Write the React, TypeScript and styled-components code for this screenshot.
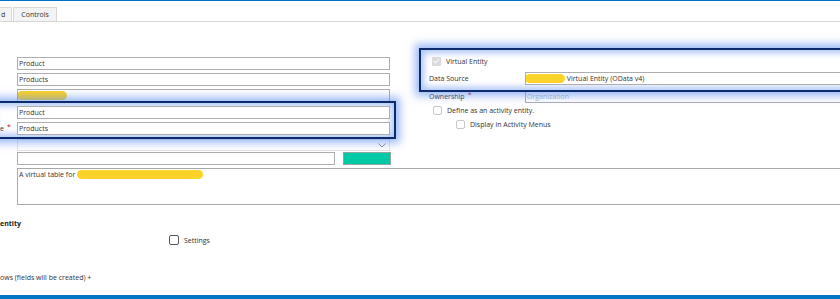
import styled, { createGlobalStyle } from "styled-components";

const GlobalStyle = createGlobalStyle`
  html, body {
    margin: 0;
    padding: 0;
    background: #ffffff;
  }
  body {
    font-family: "Open Sans", "Noto Sans", sans-serif;
    font-size: 7px;
    color: #333333;
  }
`;

const Frame = styled.div`
  width: 840px;
  height: 299px;
  box-sizing: border-box;
  overflow: hidden;
  display: flex;
  flex-direction: column;
  border-top: 1px solid #0072c6;
  border-bottom: 4px solid #0077c2;
`;

const TabBar = styled.div`
  margin-top: 6px;
  height: 15px;
  box-sizing: border-box;
  display: flex;
  align-items: flex-end;
  border-bottom: 1px solid #d6d6d6;
`;

const Tab = styled.div<{ $cut?: boolean }>`
  height: 14px;
  box-sizing: border-box;
  display: flex;
  align-items: center;
  padding: ${(p) => (p.$cut ? "0 6px 0 1px" : "0 7px")};
  margin-right: 1px;
  background: #f3f3f3;
  border: 1px solid #d8d8d8;
  border-left: ${(p) => (p.$cut ? "none" : "1px solid #d8d8d8")};
  border-bottom: none;
  color: #333;
`;

const Columns = styled.div`
  display: flex;
  align-items: flex-start;
  column-gap: 23px;
`;

const LeftCol = styled.div`
  flex: 0 0 396px;
  padding-top: 35px;
  display: flex;
  flex-direction: column;
  row-gap: 3px;
`;

const Row = styled.div<{ $h?: number }>`
  display: grid;
  grid-template-columns: 14px 373px;
  column-gap: 3px;
  align-items: center;
  height: ${(p) => p.$h ?? 13}px;
`;

const Label = styled.div`
  white-space: nowrap;
  color: #333;
`;

const Req = styled.span`
  color: #d0021b;
  margin-left: 3px;
  position: relative;
  top: -2px;
`;

const Field = styled.div<{ $muted?: boolean }>`
  height: 13px;
  box-sizing: border-box;
  border: 1px solid #adadad;
  background: #fff;
  padding: 0 1px;
  line-height: 11px;
  white-space: nowrap;
  overflow: hidden;
  display: flex;
  align-items: center;
  color: ${(p) => (p.$muted ? "#b4b4b4" : "#333")};
`;

const Redact = styled.span<{ $w: number; $shift?: number }>`
  display: inline-block;
  width: ${(p) => p.$w}px;
  height: 9px;
  border-radius: 5px;
  background: #fdd329;
  margin-left: ${(p) => p.$shift ?? 0}px;
  flex: 0 0 auto;
`;

const Highlight = styled.div`
  position: relative;
  z-index: 1;
  border: 2px solid #0c2b6c;
  box-shadow: 0 0 8px 4px rgba(90, 140, 240, 0.6),
    inset 0 0 6px 3px rgba(90, 140, 240, 0.5);
`;

const LeftHighlight = styled(Highlight)`
  margin: -4px 0 -3px -10px;
  padding: 3px 4px 2px 8px;
  display: flex;
  flex-direction: column;
  row-gap: 3px;
`;

const Dropdown = styled.div`
  height: 12px;
  box-sizing: border-box;
  border: 1px solid #e3e3e3;
  display: flex;
  align-items: center;
  justify-content: flex-end;
  padding-right: 3px;
`;

const ColorRow = styled.div`
  display: grid;
  grid-template-columns: 14px 318px 53px;
  column-gap: 3px;
  align-items: center;
  height: 13px;
  margin-top: -2px;
`;

const Swatch = styled.div`
  height: 13px;
  margin-left: 5px;
  box-sizing: border-box;
  border: 1px solid #8fa79f;
  background: #00caa5;
`;

const RightCol = styled.div`
  flex: 0 0 470px;
  padding-top: 26px;
  display: flex;
  flex-direction: column;
`;

const RightHighlight = styled(Highlight)`
  padding: 5px 0 5px 8px;
  display: flex;
  flex-direction: column;
  row-gap: 5px;
`;

const FormRow = styled.div`
  display: grid;
  grid-template-columns: 96px 1fr;
  align-items: center;
  height: 13px;
`;

const CheckRow = styled.label<{ $indent: number; $h?: number }>`
  display: flex;
  align-items: center;
  column-gap: 5px;
  padding-left: ${(p) => p.$indent}px;
  height: ${(p) => p.$h ?? 12}px;
  color: #333;
  white-space: nowrap;
`;

const Box = styled.span<{ $dark?: boolean; $size?: number }>`
  width: ${(p) => p.$size ?? 9}px;
  height: ${(p) => p.$size ?? 9}px;
  box-sizing: border-box;
  border: 1px solid ${(p) => (p.$dark ? "#555" : "#c9c9c9")};
  border-radius: 2px;
  background: #fff;
  flex: 0 0 auto;
`;

const CheckedBox = styled.span`
  width: 9px;
  height: 9px;
  box-sizing: border-box;
  border-radius: 1px;
  background: #dadada;
  display: flex;
  align-items: center;
  justify-content: center;
  flex: 0 0 auto;
`;

const Ownership = styled(FormRow)`
  margin-top: -2px;
  padding-left: 10px;
  height: 13px;
`;

const Activity = styled.div`
  margin-top: 3px;
  display: flex;
  flex-direction: column;
  row-gap: 5px;
`;

const TextArea = styled.div`
  margin: 3px 0 0 17px;
  width: 900px;
  height: 37px;
  box-sizing: border-box;
  border: 1px solid #a9a9a9;
  padding: 1px 1px;
  display: flex;
  align-self: flex-start;
`;

const TextLine = styled.div`
  display: flex;
  align-items: center;
  height: 9px;
`;

const Section = styled.div`
  display: flex;
  flex-direction: column;
`;

const SectionTitle = styled.div`
  margin-top: 14px;
  font-weight: 700;
  color: #222;
  line-height: 9px;
`;

const SettingsRow = styled(CheckRow)`
  margin-top: 7px;
`;

const Note = styled.div`
  margin-top: 28px;
  line-height: 9px;
  color: #333;
`;

export default function App() {
  return (
    <>
      <GlobalStyle />
      <Frame>
        <TabBar>
          <Tab $cut>d</Tab>
          <Tab>Controls</Tab>
        </TabBar>
        <Columns>
          <LeftCol>
            <Row>
              <Label />
              <Field>Product</Field>
            </Row>
            <Row>
              <Label />
              <Field>Products</Field>
            </Row>
            <Row>
              <Label />
              <Field>
                <Redact $w={50} $shift={-2} />
              </Field>
            </Row>
            <LeftHighlight>
              <Row>
                <Label />
                <Field>Product</Field>
              </Row>
              <Row>
                <Label>
                  e<Req>*</Req>
                </Label>
                <Field>Products</Field>
              </Row>
            </LeftHighlight>
            <Row $h={12}>
              <Label />
              <Dropdown>
                <svg width="8" height="5" viewBox="0 0 8 5">
                  <polyline
                    points="0.5,0.5 4,4 7.5,0.5"
                    fill="none"
                    stroke="#8a8a8a"
                    strokeWidth="1"
                  />
                </svg>
              </Dropdown>
            </Row>
            <ColorRow>
              <Label />
              <Field />
              <Swatch />
            </ColorRow>
          </LeftCol>
          <RightCol>
            <RightHighlight>
              <CheckRow $indent={3}>
                <CheckedBox>
                  <svg width="7" height="6" viewBox="0 0 7 6">
                    <polyline
                      points="0.8,3 2.7,4.8 6.2,0.8"
                      fill="none"
                      stroke="#f4f4f4"
                      strokeWidth="1.2"
                    />
                  </svg>
                </CheckedBox>
                Virtual Entity
              </CheckRow>
              <FormRow>
                <Label>Data Source</Label>
                <Field>
                  <Redact $w={40} $shift={-2} />
                  &nbsp;Virtual Entity (OData v4)
                </Field>
              </FormRow>
            </RightHighlight>
            <Ownership>
              <Label>
                Ownership<Req>*</Req>
              </Label>
              <Field $muted>Organization</Field>
            </Ownership>
            <Activity>
              <CheckRow $indent={14} $h={9}>
                <Box />
                Define as an activity entity.
              </CheckRow>
              <CheckRow $indent={37} $h={9}>
                <Box />
                Display in Activity Menus
              </CheckRow>
            </Activity>
          </RightCol>
        </Columns>
        <TextArea>
          <TextLine>
            A virtual table for&nbsp;
            <Redact $w={126} />
          </TextLine>
        </TextArea>
        <Section>
          <SectionTitle>entity</SectionTitle>
          <SettingsRow $indent={169} $h={10}>
            <Box $dark $size={10} />
            Settings
          </SettingsRow>
          <Note>ows (fields will be created) +</Note>
        </Section>
      </Frame>
    </>
  );
}
